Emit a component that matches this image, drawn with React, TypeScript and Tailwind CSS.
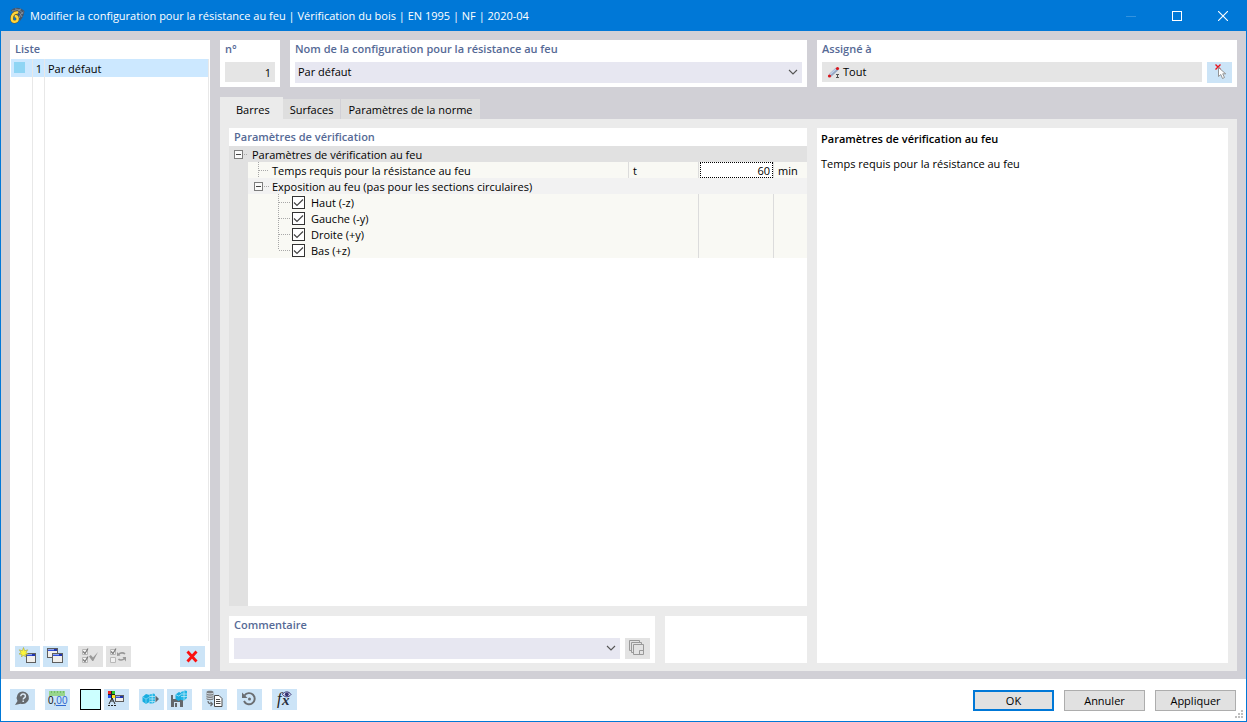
import React, { useState } from "react";

const ICON_BUTTON = "flex h-[21px] w-[25px] shrink-0 items-center justify-center bg-[#cce4f7]";
const ICON_BUTTON_OFF = "flex h-[21px] w-[25px] shrink-0 items-center justify-center bg-[#e3e3e3]";
const HEADING = "block font-semibold leading-[18px] text-[#566a96]";
const CELL_TEXT = "block pt-0.5 leading-[14px]";

function Glyph({ children }: { children: React.ReactNode }) {
  return (
    <svg width="25" height="21" viewBox="0 0 25 21" aria-hidden="true">
      {children}
    </svg>
  );
}

function IconButton({ label, off, children }: { label: string; off?: boolean; children: React.ReactNode }) {
  return (
    <button type="button" aria-label={label} disabled={off} className={off ? ICON_BUTTON_OFF : ICON_BUTTON}>
      <Glyph>{children}</Glyph>
    </button>
  );
}

function MiniWindow({ x, y, w = 9, h = 9 }: { x: number; y: number; w?: number; h?: number }) {
  return (
    <g>
      <rect x={x + 0.5} y={y + 0.5} width={w} height={h} fill="#f1efec" stroke="#5e5e5e" />
      <rect x={x + 1} y={y + 1} width={w - 1} height="1" fill="#8fa6ee" />
      <rect x={x + 1} y={y + 2} width={w - 1} height="1" fill="#3450d8" />
      <rect x={x + w - 3} y={y + 1} width="3" height="2" fill="#2036b0" />
    </g>
  );
}

function Dice() {
  return (
    <g>
      <path d="M3.500 8l3.500-3 3.500 1v7l-3.500 2-3.500-2.500z" fill="#19ade0" />
      <path d="M3.500 8l3.500 2 3.500-2M7 10v5" stroke="#7fd6f2" fill="none" strokeWidth="0.800" />
      <path d="M10.500 5.500l4.500-1 1 1v7.500l-2 1.500h-3.500z" fill="#22b6e6" />
      <path d="M10.500 7.500h5.500M10.500 10h5.500M10.500 12.500h5.500M13.200 5v9.500" stroke="#c4edf9" strokeWidth="0.700" />
    </g>
  );
}

function Chevron() {
  return (
    <svg className="pointer-events-none absolute top-[7px] right-1" width="10" height="7" viewBox="0 0 10 7" aria-hidden="true">
      <path d="M1 1l4 4 4-4" fill="none" stroke="#555" strokeWidth="1.100" />
    </svg>
  );
}

function Expander({ label }: { label: string }) {
  return (
    <button type="button" aria-label={label} aria-expanded="true" className="size-[9px] shrink-0">
      <svg width="9" height="9" viewBox="0 0 9 9" aria-hidden="true">
        <rect x="0.500" y="0.500" width="8" height="8" fill="#fafafa" stroke="#7d7d7d" />
        <path d="M2 4.500h5" stroke="#444" />
      </svg>
    </button>
  );
}

function Guide({ width, d }: { width: number; d: string }) {
  return (
    <svg className="shrink-0" width={width} height="16" viewBox={`0 0 ${width} 16`} aria-hidden="true">
      <path d={d} fill="none" stroke="#a8a8a8" strokeDasharray="1 1" />
    </svg>
  );
}

function SideRow({ name, last }: { name: string; last: boolean }) {
  const [on, setOn] = useState(true);
  return (
    <tr className="h-4 bg-[#f9f9f4]">
      <td className="bg-[#e1e1e1] p-0" />
      <td className="p-0" colSpan={2}>
        <label className="flex h-4 items-center">
          <Guide width={44} d={last ? "M30.500 0v8M31 8.500h11" : "M30.500 0v16M31 8.500h11"} />
          <span className="grid size-[13px] shrink-0">
            <input
              type="checkbox"
              checked={on}
              onChange={(e) => setOn(e.target.checked)}
              className="col-start-1 row-start-1 m-0 size-[13px] appearance-none border border-[#333] bg-white"
            />
            {on && (
              <svg className="pointer-events-none col-start-1 row-start-1" width="13" height="13" viewBox="0 0 13 13" aria-hidden="true">
                <path d="M2 6.500l3 3 6-6" fill="none" stroke="#444" strokeWidth="1.200" />
              </svg>
            )}
          </span>
          <span className={`${CELL_TEXT} pl-1.5`}>{name}</span>
        </label>
      </td>
      <td className="border-l border-[#dcdcdc] p-0" />
      <td className="border-l border-[#dcdcdc] p-0" />
    </tr>
  );
}

const SIDES = ["Haut (-z)", "Gauche (-y)", "Droite (+y)", "Bas (+z)"];
const TABS = ["Barres", "Surfaces", "Paramètres de la norme"];

function TitleBar() {
  return (
    <header className="flex h-[30px] shrink-0 items-center bg-[#0078d7] text-white">
      <svg className="ml-2 shrink-0" width="16" height="18" viewBox="0 0 16 18" aria-hidden="true">
        <path d="M1.500 4C5 0 10-.500 15.500 4c-.500 4-2 7-4.500 10L8 6z" fill="#46566b" />
        <path d="M3 4c4-1 8 1 10 6M6 2c4 0 7 3 8 5M12 2c-3 1-5 3-5 5M14.500 5c-2 1-4 3-4 6" fill="none" stroke="#8f9cac" strokeWidth="0.800" />
        <path d="M9 5.500C5 5 2.800 8 2.800 12a2.900 2.900 0 1 0 2.900-3" fill="none" stroke="#6d5314" strokeWidth="3.400" />
        <path d="M9 5.500C5 5 2.800 8 2.800 12a2.900 2.900 0 1 0 2.900-3" fill="none" stroke="#ffd53d" strokeWidth="2.400" />
      </svg>
      <h1 className="flex-1 pl-[5px] font-normal">
        Modifier la configuration pour la résistance au feu | Vérification du bois | EN 1995 | NF | 2020-04
      </h1>
      <button type="button" aria-label="Réduire" disabled className="flex h-full w-[46px] items-center justify-center">
        <svg width="10" height="10" viewBox="0 0 10 10"><path d="M0 5.500h10" stroke="#3393df" /></svg>
      </button>
      <button type="button" aria-label="Agrandir" className="flex h-full w-[46px] items-center justify-center">
        <svg width="10" height="10" viewBox="0 0 10 10"><rect x="0.500" y="0.500" width="9" height="9" fill="none" stroke="#fff" /></svg>
      </button>
      <button type="button" aria-label="Fermer" className="flex h-full w-[46px] items-center justify-center">
        <svg width="10" height="10" viewBox="0 0 10 10"><path d="M0 0l10 10M10 0L0 10" stroke="#fff" strokeWidth="1.100" /></svg>
      </button>
    </header>
  );
}

function ListPanel() {
  return (
    <aside className="flex w-[200px] shrink-0 flex-col bg-white">
      <h2 className={`${HEADING} mb-px pl-[5px]`}>Liste</h2>
      <div className="mx-px flex flex-1 flex-col border-r border-[#e8e8e8]">
        <div className="flex h-[18px] bg-[#cce8ff] leading-5">
          <span className="w-[22px] border-r border-[#e8e8e8] pt-[3px] pl-[3px]">
            <span className="block size-[11px] bg-[#8fd5f4]" />
          </span>
          <span className="w-3 border-r border-[#e8e8e8] pr-[2px] text-right">1</span>
          <span className="pl-[3px]">Par défaut</span>
        </div>
        <div className="flex flex-1">
          <span className="w-[22px] border-r border-[#e8e8e8]" />
          <span className="w-3 border-r border-[#e8e8e8]" />
        </div>
      </div>
      <div className="flex gap-[3px] px-[5px] pt-[5px] pb-1">
        <IconButton label="Nouveau">
          <MiniWindow x={11} y={7} />
          <path d="M8.500 1.500l1.200 3.300 3-1-1.700 2.700 2 1.500-2.800.4.300 2.600-2-2-2 2 .3-2.600L4 8l2-1.500-1.700-2.700 3 1z" fill="#fbf53a" stroke="#a8a43a" strokeWidth="0.600" />
        </IconButton>
        <IconButton label="Copier">
          <MiniWindow x={4} y={2} w={10} />
          <MiniWindow x={9} y={7} w={10} />
        </IconButton>
        <span className="w-1" />
        <IconButton label="Tout sélectionner" off>
          <path d="M4.500 3.500h5v5h-5zM4.500 11.500h5v5h-5z" fill="#f4f4f4" stroke="#b8b8b8" />
          <path d="M5 5.500l2 2 3-5M5 13.500l2 2 3-5" fill="none" stroke="#777" strokeWidth="1.100" />
          <path d="M11 10.500l1.800-1.500 2.200 2.500 5-5.500-4.700 9h-1z" fill="#999" />
        </IconButton>
        <IconButton label="Inverser la sélection" off>
          <path d="M4.500 3.500h5v5h-5zM4.500 11.500h5v5h-5z" fill="#f0f0f0" stroke="#b8b8b8" />
          <path d="M5 5.500l2 2 3-5" fill="none" stroke="#777" strokeWidth="1.100" />
          <path d="M12.500 8.500c2-2.200 5-2 6.500-.500M18.500 12.500c-2 2-5 1.800-6 .500" fill="none" stroke="#999" strokeWidth="1.600" />
          <path d="M11 10V6l3.500 3.500zM20 11v4.500L16.500 11z" fill="#999" />
        </IconButton>
        <span className="flex-1" />
        <IconButton label="Supprimer">
          <path d="M7.500 5.500l9 10M16.500 5.500l-9 10" stroke="#fb1010" strokeWidth="2.800" />
        </IconButton>
      </div>
    </aside>
  );
}

function ParameterTable() {
  return (
    <section className="flex flex-1 flex-col bg-white">
      <h2 className={`${HEADING} pl-[5px]`}>Paramètres de vérification</h2>
      <table className="w-full table-fixed border-separate border-spacing-0 leading-4">
        <colgroup>
          <col className="w-[19px]" />
          <col />
          <col className="w-[70px]" />
          <col className="w-[75px]" />
          <col className="w-[34px]" />
        </colgroup>
        <tbody>
          <tr className="h-4 bg-[#e1e1e1]">
            <td className="p-0">
              <span className="flex h-4 items-center pl-[5px]">
                <Expander label="Paramètres de vérification au feu" />
                <Guide width={5} d="M1 8.500h4" />
              </span>
            </td>
            <td className="p-0 pl-1" colSpan={4}>
              <span className={CELL_TEXT}>Paramètres de vérification au feu</span>
            </td>
          </tr>
          <tr className="h-4 bg-[#f9f9f4]">
            <td className="bg-[#e1e1e1] p-0" />
            <td className="p-0">
              <label htmlFor="duration" className="flex h-4 items-center">
                <Guide width={24} d="M10.500 0v16M11 8.500h10" />
                <span className={CELL_TEXT}>Temps requis pour la résistance au feu</span>
              </label>
            </td>
            <td className="border-l border-[#dcdcdc] p-0 pl-1">
              <span className={CELL_TEXT}>t</span>
            </td>
            <td className="border-l border-[#dcdcdc] p-0 pl-px">
              <input
                id="duration"
                defaultValue="60"
                className="block h-4 w-full border border-dotted border-black bg-white pt-px pr-0.5 text-right leading-[13px] text-black outline-none"
              />
            </td>
            <td className="border-l border-[#dcdcdc] p-0 pl-1">
              <span className={CELL_TEXT}>min</span>
            </td>
          </tr>
          <tr className="h-4 bg-[#f2f2f2]">
            <td className="bg-[#e1e1e1] p-0" />
            <td className="p-0" colSpan={4}>
              <span className="flex h-4 items-center pl-1.5">
                <Expander label="Exposition au feu" />
                <Guide width={9} d="M1 8.500h5" />
                <span className={CELL_TEXT}>Exposition au feu (pas pour les sections circulaires)</span>
              </span>
            </td>
          </tr>
          {SIDES.map((name, i) => (
            <SideRow key={name} name={name} last={i === SIDES.length - 1} />
          ))}
        </tbody>
      </table>
      <div className="w-[19px] flex-1 bg-[#e1e1e1]" />
    </section>
  );
}

function Footer() {
  return (
    <footer className="flex h-[42px] shrink-0 items-start bg-white pt-2.5 pr-2.5 pl-[9px]">
      <div className="flex gap-2.5">
        <IconButton label="Aide">
          <path d="M13 2.500a6.300 6.300 0 1 1-2.500 12.200L5 16l2.500-4A6.300 6.300 0 0 1 13 2.500z" fill="#666a6e" />
          <path d="M10.800 7.200c0-3 4.600-2.800 4.600 0 0 1.700-2.200 1.600-2.200 3.300M13.200 11.500v1.600" fill="none" stroke="#dceaf6" strokeWidth="1.500" />
        </IconButton>
        <IconButton label="Unités et décimales">
          <rect x="4" y="2" width="16" height="5" fill="#98d68c" />
          <path d="M6.500 2v2M9.500 2v2M12.500 2v2M15.500 2v2M18.500 2v2" stroke="#74bd68" />
          <text x="3" y="15" fontSize="10" fontFamily="Liberation Sans, sans-serif" fill="#111">0,<tspan fill="#2f68d0">00</tspan></text>
          <path d="M11 16.500h10" stroke="#2f68d0" />
        </IconButton>
        <div className="flex gap-[3px]">
          <button type="button" aria-label="Couleur" className="size-[21px] border border-black bg-[#ccffff]" />
          <IconButton label="Affichage">
            <rect x="4" y="2" width="7" height="7" fill="#222" />
            <path d="M4 2h3v3H4z" fill="#f02020" />
            <path d="M8 2h3v3H8z" fill="#2ac52a" />
            <path d="M4 6h3v3H4z" fill="#2050f0" />
            <path d="M8 6h3v3H8z" fill="#ffe51e" />
            <path d="M8 9l-3 6M8 9l3 6M8 9v4M4 16.500h2M7 16.500h2M10 16.500h2" stroke="#222" />
            <MiniWindow x={11} y={6} w={8} h={6} />
          </IconButton>
        </div>
        <div className="flex gap-[3px]">
          <IconButton label="Charger">
            <Dice />
            <path d="M16.500 6.500l3.500 3.500-3.500 3.500z" fill="#5f6870" />
          </IconButton>
          <IconButton label="Enregistrer">
            <path d="M4 6h10l2 2v10H4z" fill="#63676b" />
            <path d="M6 6h6v4H6zM7 13h6v5H7z" fill="#cfe3f3" />
            <path d="M8 14h2v4H8z" fill="#63676b" />
            <path d="M8.500 5.500L12 3l2 1v6.500l-2.500 1.500-3-2z" fill="#19ade0" />
            <path d="M14 3l4-1.500 2 .5v7l-3 2.500-3-.500z" fill="#22b6e6" />
            <path d="M14 5h6M14 7.500h6M17 2v9M8.500 5.500l3 1.500 2.500-1.500" fill="none" stroke="#c4edf9" strokeWidth="0.700" />
          </IconButton>
        </div>
        <IconButton label="Base de données">
          <path d="M4.500 3c0-1.700 7-1.700 7 0v7c0 1.600-7 1.600-7 0z" fill="#7a7d80" />
          <path d="M4.500 4c1 1.200 6 1.200 7 0M4.500 6.300c1 1.200 6 1.200 7 0M4.500 8.600c1 1.200 6 1.200 7 0" stroke="#dfe9f1" fill="none" strokeWidth="0.900" />
          <path d="M6 12c0 2.500 1.500 3 4 3M8.500 12.800l2 2.200-2 2" stroke="#666a6e" fill="none" strokeWidth="1.200" />
          <path d="M12.500 6.500h4.500l3 3v8h-7.500z" fill="#fff" stroke="#4a4a4a" />
          <path d="M14 10.500h4M14 12.500h4.500M14 14.500h4.500" stroke="#4a4a4a" />
        </IconButton>
        <IconButton label="Rétablir">
          <path d="M7.500 6.500a5.600 5.600 0 1 1-.500 5.500" fill="none" stroke="#6a6e72" strokeWidth="1.900" />
          <path d="M5 3.500v5.500h5.500z" fill="#6a6e72" />
          <circle cx="12.500" cy="10" r="1.500" fill="#6a6e72" />
        </IconButton>
        <IconButton label="Formules">
          <text x="5" y="15" fontSize="16" fontStyle="italic" fontFamily="Liberation Serif, serif" fill="#222">f</text>
          <text x="10" y="16" fontSize="15" fontStyle="italic" fontWeight="bold" fontFamily="Liberation Serif, serif" fill="#2a3040">x</text>
          <path d="M10.500 5.500c2-3.500 6.500-3.500 8.500 0-2 3-6.500 3-8.500 0z" fill="#dfe2f6" stroke="#35306f" />
          <circle cx="14.800" cy="5.300" r="1.900" fill="#35306f" />
        </IconButton>
      </div>
      <div className="ml-auto flex gap-2.5 pt-px">
        <button type="button" className="h-[21px] w-[81px] border-2 border-[#0078d7] bg-[#e1e1e1] leading-[17px]">OK</button>
        <button type="button" className="h-[21px] w-[81px] border border-[#adadad] bg-[#e1e1e1] leading-5">Annuler</button>
        <button type="button" className="h-[21px] w-[81px] border border-[#adadad] bg-[#e1e1e1] leading-5">Appliquer</button>
      </div>
      <svg className="absolute right-[3px] bottom-[3px]" width="8" height="8" viewBox="0 0 8 8" aria-hidden="true">
        <path d="M6 0h2v2H6zM3 3h2v2H3zM6 3h2v2H6zM0 6h2v2H0zM3 6h2v2H3zM6 6h2v2H6z" fill="#bfbfbf" />
      </svg>
    </footer>
  );
}

export default function App() {
  const [tab, setTab] = useState("Barres");
  return (
    <div className="relative flex min-h-screen flex-col border border-[#0078d7] bg-[#d1d0d6] font-['Open_Sans','Noto_Sans',sans-serif] text-[11px] text-black">
      <TitleBar />
      <main className="flex flex-1 gap-2.5 px-[9px] pt-[9px] pb-2">
        <ListPanel />
        <div className="flex min-w-0 flex-1 flex-col">
          <div className="flex gap-2.5">
            <section className="h-[47px] w-[60px] shrink-0 bg-white px-[5px]">
              <label htmlFor="number" className={HEADING}>n°</label>
              <input id="number" readOnly value="1" className="mt-1 block h-5 w-full bg-[#e5e5e5] pr-1 text-right" />
            </section>
            <section className="h-[47px] min-w-0 flex-1 bg-white px-[5px]">
              <label htmlFor="name" className={HEADING}>Nom de la configuration pour la résistance au feu</label>
              <div className="relative mt-1">
                <select id="name" className="block h-[21px] w-full appearance-none bg-[#e7e7f1] px-[3px]">
                  <option>Par défaut</option>
                </select>
                <Chevron />
              </div>
            </section>
            <section className="h-[47px] w-[420px] shrink-0 bg-white px-[5px]">
              <h2 className={HEADING}>Assigné à</h2>
              <div className="mt-1 flex gap-[5px]">
                <div className="flex h-5 flex-1 items-center bg-[#e5e5e5] pl-[5px]">
                  <svg width="13" height="13" viewBox="0 0 13 13" aria-hidden="true">
                    <path d="M3 9.500L10 3" stroke="#93a5c2" strokeWidth="3.600" />
                    <path d="M2.500 9L9 3" stroke="#c4d3ea" strokeWidth="1.300" />
                    <circle cx="2.500" cy="10" r="1.600" fill="#d8161c" />
                    <circle cx="10.500" cy="2.500" r="1.600" fill="#d8161c" />
                    <path d="M9 8.500h3M9 11.500h3M10.500 8.500v3" stroke="#555" />
                  </svg>
                  <span className="pl-[3px]">Tout</span>
                </div>
                <IconButton label="Sélectionner">
                  <path d="M8.500 2.500l5 5M13.500 2.500l-5 5" stroke="#e8141e" strokeWidth="1.400" />
                  <path d="M11.500 5.500v9l2.300-2 1.700 4 2-1-1.800-3.700h3z" fill="#fff" stroke="#8a8a8a" strokeWidth="0.900" />
                </IconButton>
              </div>
            </section>
          </div>
          <div role="tablist" className="mt-2.5 flex h-[22px] items-end">
            {TABS.map((name) => (
              <button
                key={name}
                type="button"
                role="tab"
                aria-selected={tab === name}
                onClick={() => setTab(name)}
                className={
                  tab === name
                    ? "h-[22px] bg-[#ebebeb] pt-1 pr-[13px] pl-4"
                    : "h-5 border-r border-[#d1d0d6] bg-[#dedede] px-[7px] pt-0.5"
                }
              >
                {name}
              </button>
            ))}
          </div>
          <div className="flex flex-1 gap-2.5 bg-[#ebebeb] px-[9px] pt-[9px] pb-2">
            <div className="flex min-w-0 flex-1 flex-col gap-2.5">
              <ParameterTable />
              <div className="flex gap-2.5">
                <section className="h-[47px] flex-1 bg-white px-[5px]">
                  <label htmlFor="comment" className={HEADING}>Commentaire</label>
                  <div className="mt-1 flex gap-[5px]">
                    <div className="relative flex-1">
                      <select id="comment" className="block h-[21px] w-full appearance-none bg-[#e7e7f1]">
                        <option></option>
                      </select>
                      <Chevron />
                    </div>
                    <IconButton label="Appliquer le commentaire" off>
                      <path d="M6.500 12.500h-2v-10h10v2M8.500 14.500h-2v-10h10v2" fill="none" stroke="#999" />
                      <path d="M8.500 6.500h10v10h-10zM14.500 16v-3.500h4" fill="none" stroke="#999" />
                    </IconButton>
                  </div>
                </section>
                <div className="w-[142px] bg-white" />
              </div>
            </div>
            <section className="w-[411px] shrink-0 bg-white px-1 pt-[3px]">
              <h2 className="font-semibold leading-4">Paramètres de vérification au feu</h2>
              <p className="mt-[9px] leading-4">Temps requis pour la résistance au feu</p>
            </section>
          </div>
        </div>
      </main>
      <Footer />
    </div>
  );
}
